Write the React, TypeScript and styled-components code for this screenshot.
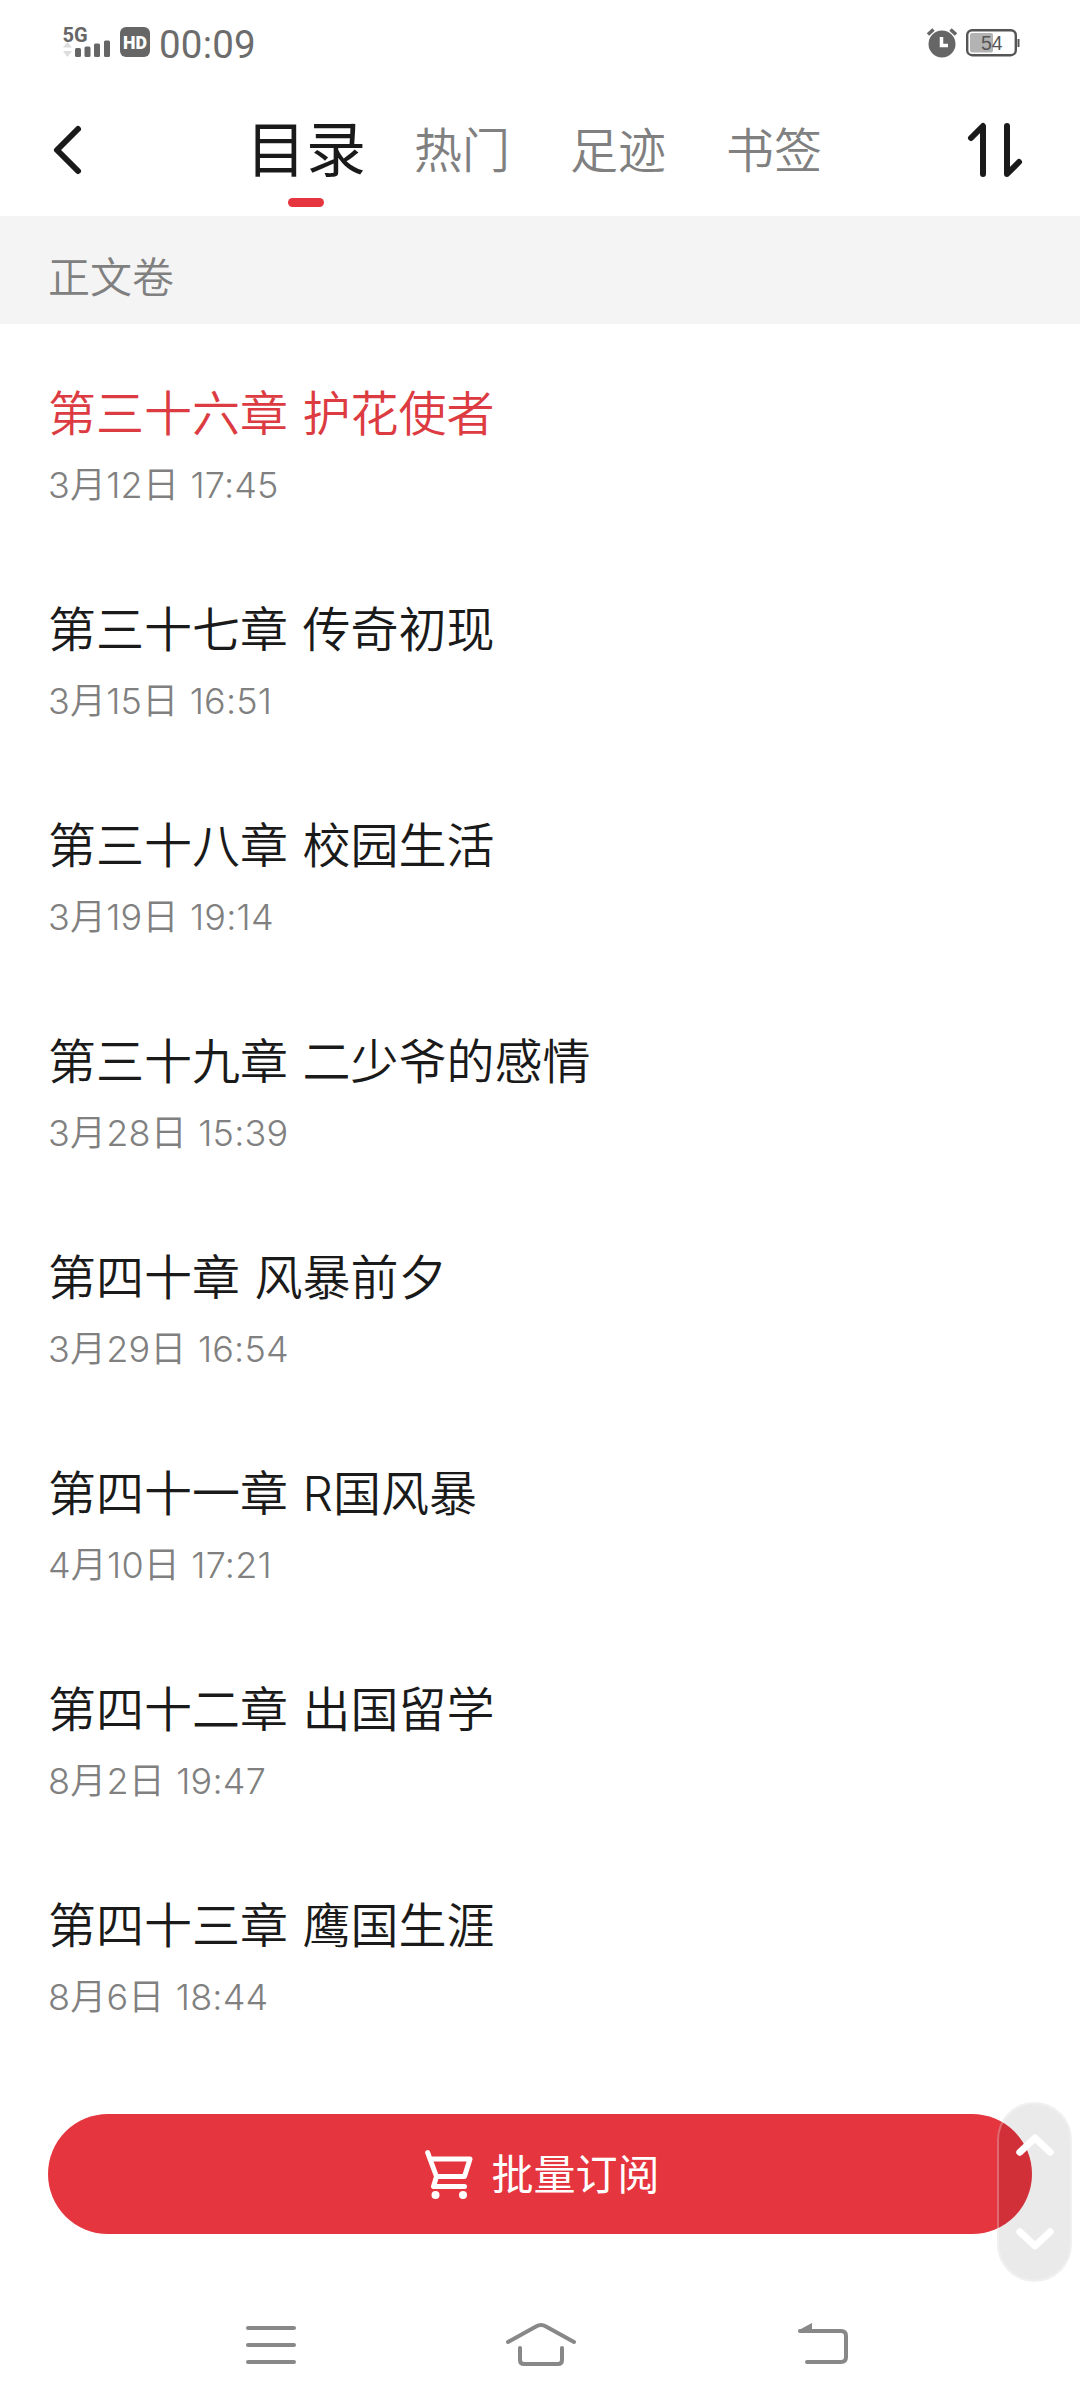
import React from 'react';
import styled, { createGlobalStyle } from 'styled-components';

const INK = '#1a1a1a';
const MUTED = '#808080';
const ACCENT = '#e5353e';

const GlobalStyle = createGlobalStyle`
  * { box-sizing: border-box; }
  body {
    margin: 0;
    background: #fff;
    font-family: "Inter", "Noto Sans CJK SC", sans-serif;
  }
`;

const Screen = styled.div`
  position: relative;
  display: flex;
  flex-direction: column;
  width: 1080px;
  height: 2408px;
  background: #fff;
  overflow: hidden;
`;

const StatusBar = styled.div`
  display: flex;
  align-items: center;
  justify-content: space-between;
  height: 84px;
  padding: 0 60px 0 60px;
  flex: none;
`;

const StatusGroup = styled.div<{ $gap: number; $drop?: number }>`
  display: flex;
  align-items: center;
  gap: ${(p) => p.$gap}px;
  padding-top: ${(p) => p.$drop ?? 0}px;
`;

const Clock = styled.span`
  color: #6c6c6c;
  font: 400 38.5px/44px Roboto, sans-serif;
  letter-spacing: 0.2px;
  margin-left: -1px;
  padding-top: 5px;
`;

const Header = styled.header`
  display: flex;
  align-items: center;
  height: 132px;
  padding: 0 48px;
  flex: none;
`;

const IconButton = styled.button`
  display: flex;
  padding: 0;
  border: 0;
  background: none;
`;

const Tabs = styled.nav`
  display: flex;
  flex: 1;
  height: 100%;
  margin-left: 144px;
`;

const Tab = styled.div<{ $active?: boolean }>`
  position: relative;
  display: flex;
  align-items: center;
  justify-content: center;
  width: 156px;
  padding-top: ${(p) => (p.$active ? 0 : 2)}px;
  white-space: nowrap;
  color: ${(p) => (p.$active ? INK : MUTED)};
  font-size: ${(p) => (p.$active ? 60 : 48)}px;
  font-weight: ${(p) => (p.$active ? 400 : 350)};
  line-height: 72px;
`;

const TabMark = styled.i`
  position: absolute;
  bottom: 9px;
  left: 60px;
  width: 36px;
  height: 9px;
  border-radius: 5px;
  background: ${ACCENT};
`;

const Volume = styled.div`
  display: flex;
  align-items: center;
  height: 108px;
  padding: 9px 48px 0;
  flex: none;
  background: #f4f4f4;
  color: ${MUTED};
  font-size: 42px;
  font-weight: 350;
`;

const List = styled.main`
  display: flex;
  flex-direction: column;
  flex: none;
`;

const Row = styled.article`
  display: flex;
  flex-direction: column;
  height: 216px;
  padding: 54px 48px 0;
  gap: 5px;
  white-space: nowrap;
`;

const Title = styled.div<{ $current?: boolean }>`
  color: ${(p) => (p.$current ? '#dc3b42' : INK)};
  font-size: 48px;
  font-weight: 350;
  line-height: 72px;
  word-spacing: 1px;
`;

const Stamp = styled.div`
  color: ${MUTED};
  font-size: 36px;
  font-weight: 350;
  line-height: 60px;
  letter-spacing: 0.2px;
  word-spacing: 1px;
`;

const Footer = styled.div`
  display: flex;
  flex-direction: column;
  padding: 62px 48px 0;
  flex: none;
`;

const Subscribe = styled.button`
  display: flex;
  align-items: center;
  justify-content: center;
  gap: 18px;
  height: 120px;
  padding: 0 0 0 5px;
  border: 0;
  border-radius: 60px;
  background: ${ACCENT};
  color: #fff;
`;

const SubscribeLabel = styled.span`
  padding-bottom: 5px;
  font: 400 42px/60px "Noto Sans CJK SC", sans-serif;
`;

const Scroller = styled.div`
  position: absolute;
  left: 997px;
  top: 2102px;
  display: flex;
  flex-direction: column;
  align-items: center;
  justify-content: space-between;
  width: 75px;
  height: 180px;
  padding: 30px 0;
  border: 2px solid rgba(255, 255, 255, 0.28);
  border-radius: 38px;
  background: rgba(0, 0, 0, 0.082);
`;

const SystemNav = styled.div`
  display: grid;
  grid-template-columns: 1fr 74px 1fr;
  align-items: center;
  padding: 86px 228px 0 243px;
  flex: none;

  svg:first-child { justify-self: start; }
  svg:nth-child(2) { margin-left: -7px; }
  svg:last-child { justify-self: end; }
`;

const CHAPTERS = [
  ['第三十六章 护花使者', '3月12日 17:45'],
  ['第三十七章 传奇初现', '3月15日 16:51'],
  ['第三十八章 校园生活', '3月19日 19:14'],
  ['第三十九章 二少爷的感情', '3月28日 15:39'],
  ['第四十章 风暴前夕', '3月29日 16:54'],
  ['第四十一章 R国风暴', '4月10日 17:21'],
  ['第四十二章 出国留学', '8月2日 19:47'],
  ['第四十三章 鹰国生涯', '8月6日 18:44'],
];

const SignalIcon = () => (
  <svg width="50" height="46" viewBox="-3 -8 50 46">
    <text x="-0.500" y="14.500" fontFamily="Roboto" fontWeight="700" fontSize="20" fill="#666">5G</text>
    <path d="M4.500 15l4.500 5.500h-9zM4.500 30l4.500-6h-9z" fill="#ddd" />
    <g fill="#666">
      <rect x="12" y="21" width="6" height="9" rx="1.500" />
      <rect x="21.500" y="19.500" width="6" height="10.500" rx="1.500" />
      <rect x="31" y="16.500" width="6" height="13.500" rx="1.500" />
      <rect x="41" y="13.500" width="6" height="16.500" rx="1.500" />
    </g>
  </svg>
);

const HdIcon = () => (
  <svg width="30" height="30" viewBox="0 0 30 30">
    <rect width="30" height="30" rx="6" fill="#666" />
    <text x="3" y="21.500" fontFamily="Roboto" fontWeight="900" fontSize="18.500" textLength="24" lengthAdjust="spacingAndGlyphs" fill="#fff">HD</text>
  </svg>
);

const AlarmIcon = () => (
  <svg width="30" height="30" viewBox="0 0 30 30">
    <circle cx="15" cy="16" r="13.500" fill="#666" />
    <path d="M1 6.500L6.500 1.500M29 6.500L23.500 1.500" stroke="#666" strokeWidth="3.500" />
    <path d="M14.500 9v8.500h6.500" fill="none" stroke="#fff" strokeWidth="3.500" />
  </svg>
);

const BatteryIcon = () => (
  <svg width="54" height="28" viewBox="0 0 54 28">
    <rect x="1.200" y="1.200" width="48.600" height="25" rx="5" fill="#fff" stroke="#555" strokeWidth="2.400" />
    <rect x="4" y="4" width="23" height="19.500" rx="2" fill="#b3b3b3" />
    <path d="M52.500 10v8" stroke="#555" strokeWidth="2" />
    <text x="15" y="21" fontFamily="Liberation Sans" fontSize="19.500" fill="#555">54</text>
  </svg>
);

const BackIcon = () => (
  <svg width="36" height="60" viewBox="0 0 36 60" fill="none" stroke={INK} strokeWidth="6" strokeLinecap="round" strokeLinejoin="round">
    <path d="M30 9L9 30l21 21" />
  </svg>
);

const SortIcon = () => (
  <svg width="66" height="60" viewBox="0 0 66 60" fill="none" stroke={INK} strokeWidth="6" strokeLinecap="round" strokeLinejoin="round">
    <path d="M5 18L17 6v48M41 6v48L53 42" />
  </svg>
);

const CartIcon = () => (
  <svg width="48" height="49" viewBox="0 0 48 49" fill="none" stroke="#fff" strokeWidth="5" strokeLinecap="round" strokeLinejoin="round">
    <path d="M2.700 2.700L5 9l6.500 17.500M5 9h40l-5.500 17.500h-28L8.500 36.500h31" />
    <circle cx="10.500" cy="45" r="4" fill="#fff" stroke="none" />
    <circle cx="38" cy="45" r="4" fill="#fff" stroke="none" />
  </svg>
);

const Chevron = ({ down }: { down?: boolean }) => (
  <svg width="38" height="22" viewBox="0 0 38 22" fill="none" stroke="#fff" strokeWidth="7" strokeLinecap="round" strokeLinejoin="round">
    <path d={down ? 'M3.800 3.800L19 18 34.200 3.800' : 'M3.800 18.200L19 4l15.200 14.200'} />
  </svg>
);

const MenuIcon = () => (
  <svg width="54" height="48" viewBox="0 0 54 48" stroke="#888" strokeWidth="4" strokeLinecap="round">
    <path d="M5 8h46M5 25h46M5 42h46" />
  </svg>
);

const HomeIcon = () => (
  <svg width="74" height="48" viewBox="0 0 74 48" fill="none" stroke="#888" strokeWidth="4" strokeLinecap="round">
    <path d="M4 22L32 6.500Q37 3.500 42 6.500L70 22" />
    <path d="M16 28v12q0 4 4 4h34q4 0 4-4v-12" />
  </svg>
);

const ReturnIcon = () => (
  <svg width="56" height="48" viewBox="0 0 56 48" fill="none" stroke="#888" strokeWidth="4" strokeLinecap="round">
    <path d="M4 11h41q5 0 5 5v21q0 5-5 5h-34" />
    <path d="M2 10.500L16 3v9H3z" fill="#888" stroke="none" />
  </svg>
);

export default function App() {
  return (
    <Screen>
      <GlobalStyle />
      <StatusBar>
        <StatusGroup $gap={10}>
          <SignalIcon />
          <HdIcon />
          <Clock>00:09</Clock>
        </StatusGroup>
        <StatusGroup $gap={9} $drop={2}>
          <AlarmIcon />
          <BatteryIcon />
        </StatusGroup>
      </StatusBar>
      <Header>
        <IconButton aria-label="返回"><BackIcon /></IconButton>
        <Tabs>
          <Tab $active>目录<TabMark /></Tab>
          <Tab>热门</Tab>
          <Tab>足迹</Tab>
          <Tab>书签</Tab>
        </Tabs>
        <IconButton aria-label="排序"><SortIcon /></IconButton>
      </Header>
      <Volume>正文卷</Volume>
      <List>
        {CHAPTERS.map(([title, stamp], i) => (
          <Row key={title}>
            <Title $current={i === 0}>{title}</Title>
            <Stamp>{stamp}</Stamp>
          </Row>
        ))}
      </List>
      <Footer>
        <Subscribe><CartIcon /><SubscribeLabel>批量订阅</SubscribeLabel></Subscribe>
      </Footer>
      <SystemNav>
        <MenuIcon />
        <HomeIcon />
        <ReturnIcon />
      </SystemNav>
      <Scroller>
        <Chevron />
        <Chevron down />
      </Scroller>
    </Screen>
  );
}
